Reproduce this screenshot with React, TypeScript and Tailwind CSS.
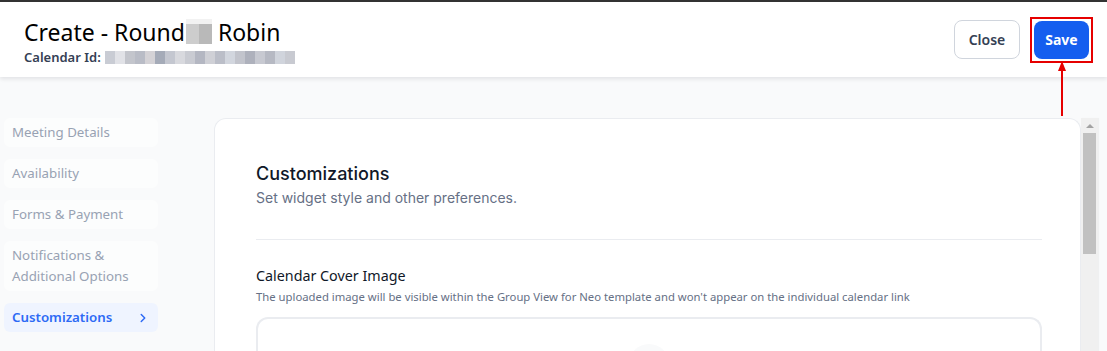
import React from 'react';
import { ChevronRight } from 'lucide-react';

const idBlocks = ['#c9ccd4', '#e1e2e7', '#c3c5cc', '#b9bcc6', '#d4d2d6', '#a5abb8', '#c4c7d0', '#d8d9de', '#c9cbd2', '#b4b7c2', '#cfd0d6', '#bbbec8', '#d2d6de', '#c2c4cc', '#aeb1bc', '#c7c9d1', '#b6b9c3', '#d0d4dc', '#c8cad1'];

const navItems = ['Meeting Details', 'Availability', 'Forms & Payment'];

function Header() {
  return (
    <header className="relative z-10 flex h-[75px] shrink-0 items-center justify-between bg-white pl-6 pr-[14px] shadow-[0_2px_4px_rgba(16,24,40,0.10)]">
      <div className="flex flex-col pt-[6px]">
        <h1 className="flex items-center text-[23px] leading-[28px] text-black">
          Create - Round
          <span className="mx-[1px] inline-flex h-[25px] w-[26px] flex-wrap">
            <span className="h-[5px] w-[26px] bg-[#f2f2f2]" />
            <span className="h-[20px] w-[13px] bg-[#cdcdcd]" />
            <span className="h-[20px] w-[13px] bg-[#b9b9b9]" />
          </span>
          <span className="ml-[5px]">Robin</span>
        </h1>
        <div className="mt-[2px] flex items-center text-[13px] font-semibold text-[#344054]">
          Calendar Id:
          <span className="ml-[4px] flex h-[13px]">
            {idBlocks.map((c, i) => (
              <span key={i} className="h-full w-[10px]" style={{ backgroundColor: c }} />
            ))}
          </span>
        </div>
      </div>
      <div className="flex items-center gap-[10px]">
        <button className="h-[39px] w-[66px] rounded-lg border border-[#d0d5dd] bg-white text-sm font-semibold text-[#344054]">
          Close
        </button>
        <div className="relative border-2 border-[#e60000] p-[2px]">
          <button className="h-[38px] w-[55px] rounded-lg bg-[#155eef] text-sm font-bold text-white">Save</button>
          <div className="absolute left-[26px] top-full flex flex-col items-center">
            <span className="h-0 w-0 border-x-[4px] border-b-[10px] border-x-transparent border-b-[#e60000]" />
            <span className="h-[45px] w-[2px] bg-[#e60000]" />
          </div>
        </div>
      </div>
    </header>
  );
}

function Sidebar() {
  return (
    <nav className="flex w-[154px] flex-col gap-[12px] text-[13.3px] text-[#98a2b3]">
      {navItems.map(label => (
        <div key={label} className="flex h-[29px] items-center rounded-md bg-[#fcfdfd] px-2">
          {label}
        </div>
      ))}
      <div className="flex flex-col justify-center rounded-md bg-[#fcfdfd] px-2 py-[4px] leading-[21px]">
        <span>Notifications &amp;</span>
        <span>Additional Options</span>
      </div>
      <div className="flex h-[29px] items-center justify-between rounded-md bg-[#eff4ff] pl-2 pr-[8px] font-semibold text-[#2d6af5]">
        Customizations
        <ChevronRight size={14} strokeWidth={2.5} />
      </div>
    </nav>
  );
}

function Scrollbar() {
  return (
    <div className="flex w-[17px] flex-col items-center bg-[#f0f0f0] shadow-[1px_0_1px_rgba(0,0,0,0.04)]">
      <span className="mt-[6px] h-0 w-0 border-x-[4px] border-b-[4px] border-x-transparent border-b-[#a3a3a3]" />
      <span className="mt-[5px] h-[121px] w-[13px] bg-[#c1c1c1]" />
    </div>
  );
}

function Card() {
  return (
    <section className="flex-1 rounded-t-xl border border-b-0 border-[#eaecf0] bg-white pl-[41px] pr-[38px] pt-[42px]">
      <h2 className="text-lg font-medium leading-[26px] text-[#101828]" style={{ fontFamily: 'Inter, sans-serif' }}>
        Customizations
      </h2>
      <p className="text-[14px] text-[#667085]" style={{ fontFamily: 'Inter, sans-serif' }}>
        Set widget style and other preferences.
      </p>
      <div className="mt-[31px] h-px bg-[#eaecf0]" />
      <div className="mt-[25px] text-[14.3px] text-[#101828]">Calendar Cover Image</div>
      <p className="mt-[3px] text-[11.3px] text-[#667085]">
        The uploaded image will be visible within the Group View for Neo template and won't appear on the individual calendar link
      </p>
      <div className="mt-[11px] flex h-[60px] justify-center rounded-t-xl border-2 border-b-0 border-[#eaecf0] pt-[25px]">
        <div className="h-[40px] w-[40px] rounded-full bg-[#f9fafb]" />
      </div>
    </section>
  );
}

export default function App() {
  return (
    <div className="flex h-[351px] w-[1107px] flex-col overflow-hidden border-t-2 border-[#333333] bg-[#f9fafb]" style={{ fontFamily: '"Noto Sans", sans-serif' }}>
      <Header />
      <div className="flex flex-1 gap-[56px] pl-[4px] pt-[41px]">
        <Sidebar />
        <div className="flex flex-1 pr-[9px]">
          <Card />
          <Scrollbar />
        </div>
      </div>
    </div>
  );
}
